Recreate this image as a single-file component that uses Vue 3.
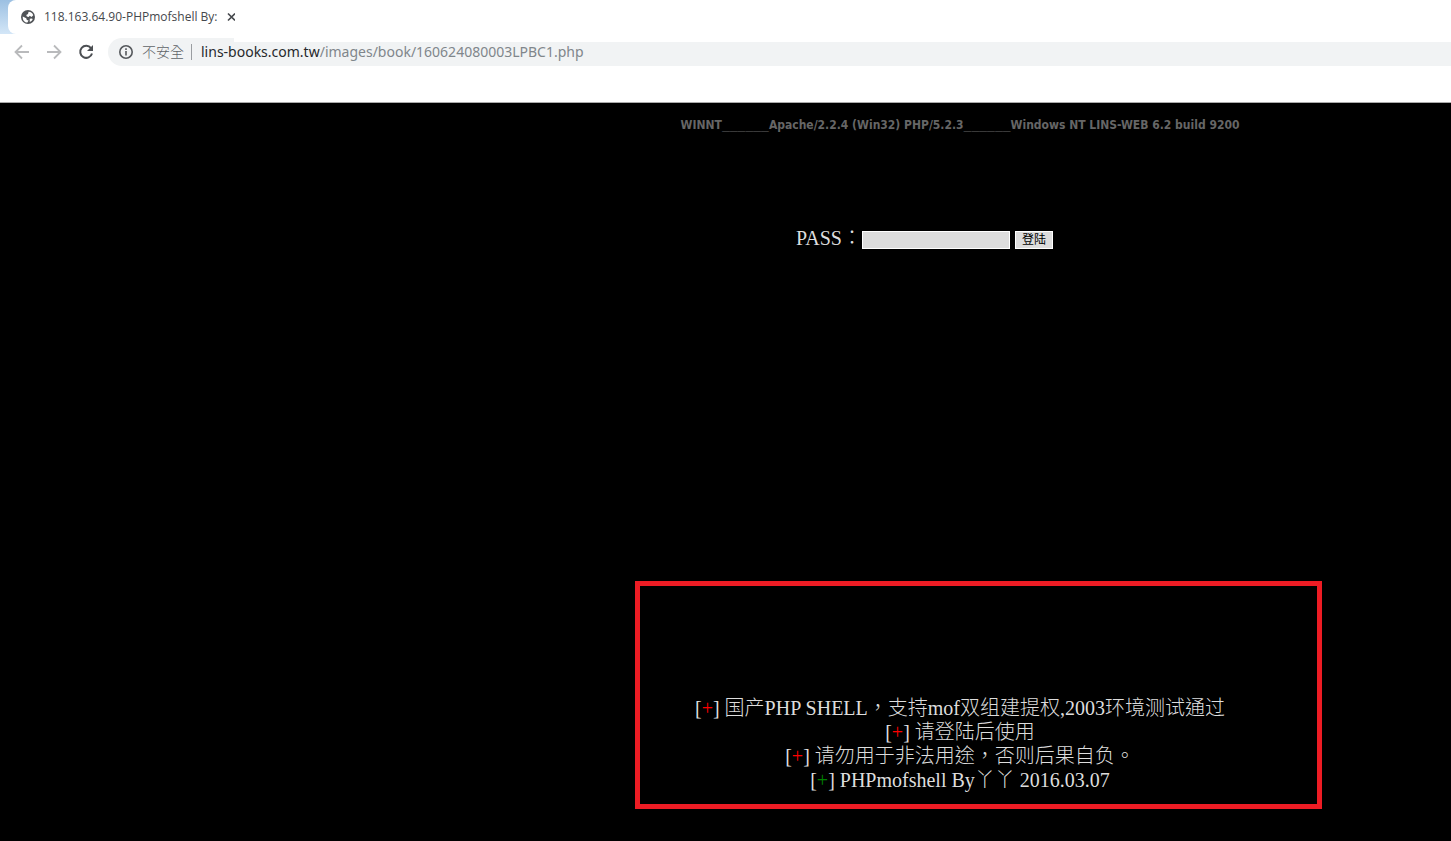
<script setup>
import { ref } from 'vue';

const pass = ref('');
const url = ref('lins-books.com.tw/images/book/160624080003LPBC1.php');

const notes = [
  { text: '国产PHP SHELL，支持mof双组建提权,2003环境测试通过', color: 'red' },
  { text: '请登陆后使用', color: 'red' },
  { text: '请勿用于非法用途，否则后果自负。', color: 'red' },
  { text: 'PHPmofshell By丫丫 2016.03.07', color: 'green' },
];
</script>

<template>
  <div class="window">
    <header class="browser">
      <div class="tab-strip">
        <div class="tab">
          <svg class="globe" viewBox="0 0 24 24">
            <circle cx="12" cy="12" r="12" fill="#505357" />
            <path d="M3 11 L9 14 L10 17 L13 18 L11 21.500 C6 21.500 2.500 17 3 11 Z" fill="#fff" />
            <path d="M13 3 C17 3 20 5.500 21 9 L18 12 L15 10 L13 12 L10 11 L9 8.500 L12 7 Z" fill="#fff" />
            <path d="M15 15 L19 14.500 L20 16 C19 18.500 17 20 15 20.500 Z" fill="#fff" />
          </svg>
          <span class="tab-title">118.163.64.90-PHPmofshell By:</span>
          <button class="tab-close" type="button" aria-label="close">
            <svg viewBox="0 0 8 10">
              <path d="M1 1.500 L8 8.500 M8 1.500 L1 8.500" fill="none" stroke="#45484c" stroke-width="1.600" />
            </svg>
          </button>
        </div>
      </div>

      <div class="toolbar">
        <button class="nav" type="button" aria-label="back">
          <svg viewBox="0 0 16 16">
            <path d="M15 8 H2 M8 1.500 L1.500 8 L8 14.500" fill="none" stroke="#b9babc" stroke-width="1.800" />
          </svg>
        </button>
        <button class="nav" type="button" aria-label="forward">
          <svg viewBox="0 0 16 16">
            <path d="M1 8 H14 M8 1.500 L14.500 8 L8 14.500" fill="none" stroke="#b9babc" stroke-width="1.800" />
          </svg>
        </button>
        <button class="nav" type="button" aria-label="reload">
          <svg viewBox="0 0 16 16">
            <path d="M13 4.200 A6 6 0 1 0 14 9.500" fill="none" stroke="#4c4f53" stroke-width="2" />
            <path d="M15 1 V7 H9 Z" fill="#4c4f53" />
          </svg>
        </button>
        <div class="address">
          <svg class="info" viewBox="0 0 16 16">
            <circle cx="8" cy="8" r="6.200" fill="none" stroke="#55585c" stroke-width="1.600" />
            <path d="M8 7 V11.500 M8 4.300 V6" stroke="#55585c" stroke-width="1.600" />
          </svg>
          <span class="insecure">不安全</span>
          <a class="url" :href="'http://' + url">lins-books.com.tw<span>/images/book/160624080003LPBC1.php</span></a>
        </div>
      </div>
    </header>

    <main class="page">
      <div class="server">WINNT<span>______</span>Apache/2.2.4 (Win32) PHP/5.2.3<span>______</span>Windows NT LINS-WEB 6.2 build 9200</div>

      <form class="login" @submit.prevent>
        <label for="pass">PASS：</label>
        <input id="pass" v-model="pass" type="password" />
        <button type="submit">登陆</button>
      </form>

      <section class="notes">
        <p v-for="note in notes" :key="note.text">
          [<span :class="note.color">+</span>] {{ note.text }}
        </p>
      </section>
    </main>
  </div>
</template>

<style>
body {
  background: #000;
}
</style>

<style scoped>
.window {
  min-height: 100vh;
  display: flex;
  flex-direction: column;
  overflow: hidden;
}
button {
  padding: 0;
  border: 0;
  background: none;
}
svg {
  display: block;
}

/* browser */
.browser {
  height: 102px;
  background: #fff;
  border-bottom: 1px solid #aaa;
  font-family: 'Noto Sans', 'Noto Sans CJK TC', sans-serif;
}
.tab-strip {
  display: flex;
  height: 34px;
  padding-left: 8px;
  background: linear-gradient(to bottom, #9cc0e2, #d3e6f7) no-repeat left / 16px 34px;
}
.tab {
  flex: 1;
  display: flex;
  align-items: center;
  padding-left: 13px;
  background: #fff;
  border-radius: 8px 0 0 8px;
}
.globe {
  width: 14px;
  height: 14px;
  margin-right: 9px;
}
.tab-title {
  font-family: 'Open Sans', sans-serif;
  font-size: 12px;
  line-height: 16px;
  color: #45484c;
}
.tab-close {
  margin-left: 9px;
}
.tab-close svg {
  width: 8px;
  height: 10px;
}
.toolbar {
  display: flex;
  align-items: center;
  gap: 16px;
  height: 28px;
  margin-top: 4px;
  padding-left: 14px;
}
.nav svg {
  width: 16px;
  height: 16px;
}
.address {
  position: relative;
  flex: 1;
  display: flex;
  align-items: center;
  height: 28px;
  margin-left: -2px;
  padding-left: 10px;
  background: #f1f3f4;
  border-radius: 14px 0 0 14px;
}
.address::after {
  content: '';
  position: absolute;
  top: 0;
  left: 126px;
  right: 0;
  height: 4px;
  background: #fff;
}
.info {
  width: 16px;
  height: 16px;
}
.insecure {
  margin-left: 8px;
  padding-right: 7px;
  border-right: 1px solid #9a9da1;
  font-size: 14px;
  font-weight: 300;
  line-height: 16px;
  color: #5f6368;
}
.url {
  margin-left: 9px;
  font-size: 14px;
  line-height: 20px;
  color: #26282b;
  text-decoration: none;
}
.url span {
  color: #80868b;
}

/* the page is wider than the window, its centre line sits right of the middle */
.page {
  flex: 1;
  display: flex;
  flex-direction: column;
  align-items: center;
  padding: 14px 0 32px 469px;
  background: #000;
  color: #ddd;
  font-family: 'Liberation Serif', 'Noto Sans CJK TC', serif;
  font-size: 20px;
  font-weight: 300;
  line-height: 24px;
}
.server {
  font-family: 'DejaVu Sans Condensed', 'DejaVu Sans', sans-serif;
  font-size: 12px;
  font-weight: bold;
  line-height: 16px;
  color: #666;
  white-space: nowrap;
}
.server span {
  font-family: 'DejaVu Sans Mono', monospace;
  font-size: 13px;
  font-weight: normal;
}
.login {
  display: flex;
  align-items: center;
  margin-top: 93px;
  margin-right: 71px;
}
.login input {
  box-sizing: border-box;
  width: 148px;
  height: 18px;
  margin: 4px 5px 0 0;
  padding: 1px 2px;
  border: 1px solid #fff;
  background: #ddd;
  font-size: 12px;
}
.login button {
  width: 38px;
  height: 18px;
  margin-top: 4px;
  border: 1px solid #fff;
  background: #ddd;
  color: #000;
  font-family: 'Liberation Sans', 'Noto Sans CJK SC', sans-serif;
  font-size: 12px;
  line-height: 16px;
}
.notes {
  box-sizing: border-box;
  width: 687px;
  margin-top: auto;
  margin-left: 37px;
  padding: 110px 37px 12px 0;
  border: 5px solid #ed1c24;
  text-align: center;
}
.notes p {
  margin: 0;
  white-space: nowrap;
}
.red {
  color: #f00;
}
.green {
  color: #008000;
}
</style>
